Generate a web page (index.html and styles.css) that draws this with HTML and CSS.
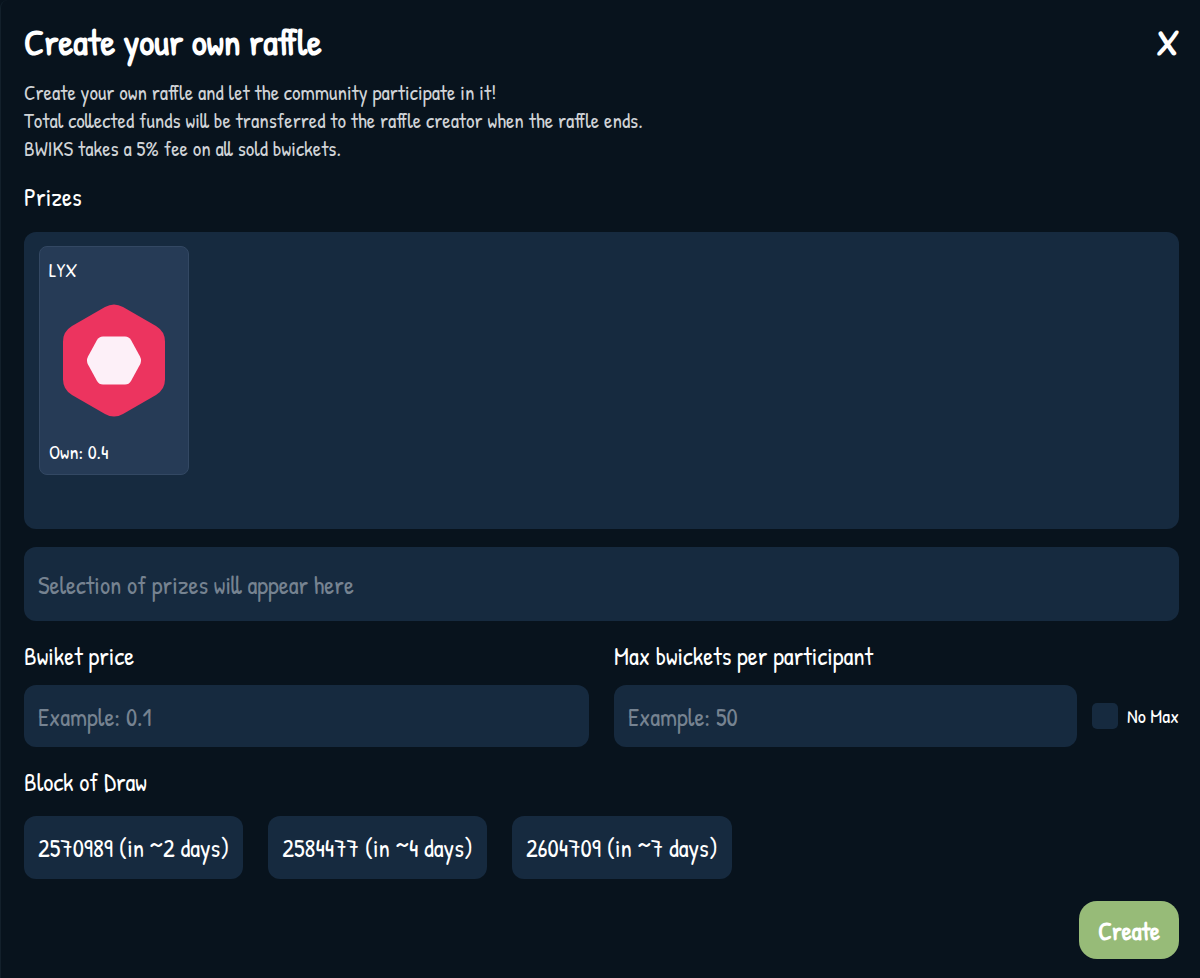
FILE: index.html
```html
<!DOCTYPE html>
<html lang="en">
<head>
    <meta charset="UTF-8">
    <meta name="viewport" content="width=device-width, initial-scale=1.0">
    <title>Create your own raffle</title>
    <link rel="stylesheet" href="styles.css">
</head>
<body>
    <main class="dialog">
        <header class="dialog-header">
            <h1>Create your own raffle</h1>
            <button class="close" type="button" aria-label="Close">X</button>
        </header>

        <p class="description">
            Create your own raffle and let the community participate in it!<br>
            Total collected funds will be transferred to the raffle creator when the raffle ends.<br>
            BWIKS takes a 5% fee on all sold bwickets.
        </p>

        <form class="raffle-form">
            <h2>Prizes</h2>
            <div class="prizes">
                <button class="prize" type="button">
                    <span>LYX</span>
                    <svg class="prize-logo" width="104" height="114" viewBox="0 0 104 114">
                        <path fill="#ec345f" d="M43 3Q52-2 61 3L94 22Q103 27.500 103 37.500V75.500Q103 85.500 94 91L61 110Q52 115 43 110L10 91Q1 85.500 1 75.500V37.500Q1 27.500 10 22Z"/>
                        <path fill="#fdf0f8" d="M41 32.500H63Q67 32.500 69 36L78 52.500Q80 56.500 78 60.500L69 77Q67 80.500 63 80.500H41Q37 80.500 35 77L26 60.500Q24 56.500 26 52.500L35 36Q37 32.500 41 32.500Z"/>
                    </svg>
                    <span>Own: 0.4</span>
                </button>
            </div>

            <div class="selection">Selection of prizes will appear here</div>

            <div class="fields">
                <div class="field">
                    <label for="price">Bwiket price</label>
                    <input class="text-input" type="text" id="price" placeholder="Example: 0.1">
                </div>
                <div class="field">
                    <label for="max">Max bwickets per participant</label>
                    <div class="max-row">
                        <input class="text-input" type="text" id="max" placeholder="Example: 50">
                        <label class="no-max" for="noMax"><input type="checkbox" id="noMax">No Max</label>
                    </div>
                </div>
            </div>

            <h2>Block of Draw</h2>
            <div class="blocks">
                <button type="button">2570989 (in ~2 days)</button>
                <button type="button">2584477 (in ~4 days)</button>
                <button type="button">2604709 (in ~7 days)</button>
            </div>

            <div class="actions">
                <button class="create" type="submit">Create</button>
            </div>
        </form>
    </main>
</body>
</html>
```
FILE: styles.css
```css
* {
    box-sizing: border-box;
}
body {
    margin: 0;
    background-color: #08131d;
    color: #fff;
    font-family: "Patrick Hand", Lato, sans-serif;
    font-size: 25px;
}
button, input {
    font: inherit;
    color: inherit;
    border: none;
}
button {
    cursor: pointer;
}
.dialog {
    padding: 18px 21px 19px 23px;
    border-left: 1px solid #13202b;
    border-top-left-radius: 8px;
}
.dialog-header {
    display: flex;
    justify-content: space-between;
    align-items: center;
    height: 46px;
}
h1 {
    margin: 0;
    font-size: 37px;
    font-weight: bold;
}
h2, .field label {
    display: block;
    margin: 0;
    font-size: 25px;
    font-weight: normal;
    line-height: 28px;
}
.close {
    padding: 0;
    background: none;
    font-size: 37px;
    font-weight: bold;
}
.description {
    margin: 15px 0 20px;
    color: #d0d3d7;
    font-size: 21px;
    line-height: 28px;
}
.prizes {
    min-height: 297px;
    margin: 21px 0 18px;
    padding: 14px 15px;
    background-color: #162a3f;
    border-radius: 12px;
}
.prize {
    display: flex;
    flex-direction: column;
    justify-content: space-between;
    width: 150px;
    height: 229px;
    padding: 12px 9px 11px;
    background-color: #263b56;
    border: 1px solid #334863;
    border-radius: 8px;
    font-size: 20px;
    line-height: 22px;
    text-align: left;
}
.prize-logo {
    align-self: center;
}
.selection {
    padding: 23px 14px 21px;
    background-color: #162a3f;
    border-radius: 12px;
    color: #768391;
    line-height: 30px;
}
.fields {
    display: grid;
    grid-template-columns: 1fr 1fr;
    gap: 25px;
    margin: 21px 0;
}
.text-input {
    width: 100%;
    min-width: 0;
    height: 62px;
    margin-top: 15px;
    padding: 2px 14px 0;
    background-color: #162a3f;
    border-radius: 12px;
}
.text-input::placeholder {
    color: #768391;
    opacity: 1;
}
.max-row {
    display: flex;
    align-items: center;
    gap: 15px;
}
.field .no-max {
    display: flex;
    align-items: center;
    gap: 9px;
    margin-top: 15px;
    font-size: 20px;
    white-space: nowrap;
}
.no-max input {
    appearance: none;
    width: 26px;
    height: 26px;
    margin: 0;
    background-color: #162a3f;
    border-radius: 5px;
}
.no-max input:checked {
    background-color: #97bb78;
}
.blocks {
    display: flex;
    flex-wrap: wrap;
    gap: 25px;
    margin: 20px 0 22px;
}
.blocks button {
    height: 63px;
    padding: 1px 14px 0;
    background-color: #162a3f;
    border-radius: 12px;
}
.actions {
    display: flex;
    justify-content: flex-end;
}
.create {
    height: 58px;
    padding: 2px 19px 0;
    background-color: #97bb78;
    border-radius: 18px;
    font-weight: bold;
}
```
